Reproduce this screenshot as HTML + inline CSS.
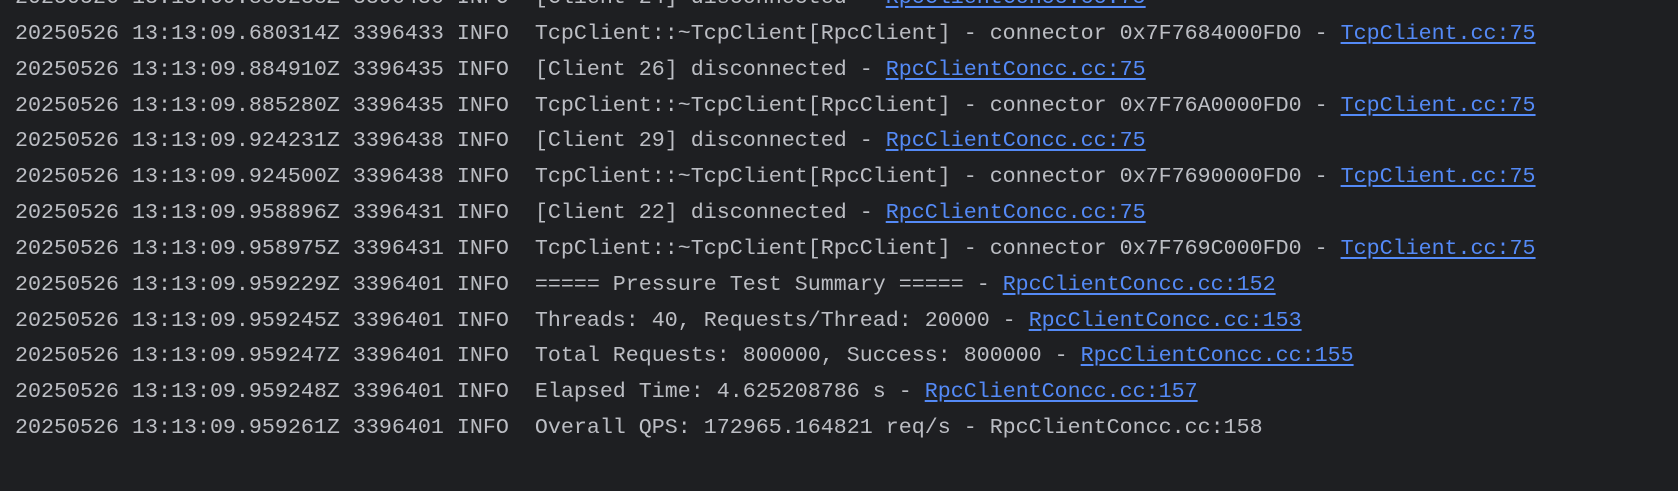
<!DOCTYPE html>
<html><head><meta charset="utf-8"><style>
html,body{margin:0;padding:0;background:#1e1f22;width:1678px;height:491px;overflow:hidden}
pre{margin:0;position:absolute;left:15px;top:-20px;font-family:"Liberation Mono","DejaVu Sans Mono",monospace;font-size:21.67px;line-height:35.85px;color:#bcbec4;white-space:pre}
a{color:#548af7;text-decoration:underline;text-underline-offset:3px}
</style></head><body><pre>20250526 13:13:09.880238Z 3396436 INFO  [Client 24] disconnected - <a>RpcClientConcc.cc:75</a>
20250526 13:13:09.680314Z 3396433 INFO  TcpClient::~TcpClient[RpcClient] - connector 0x7F7684000FD0 - <a>TcpClient.cc:75</a>
20250526 13:13:09.884910Z 3396435 INFO  [Client 26] disconnected - <a>RpcClientConcc.cc:75</a>
20250526 13:13:09.885280Z 3396435 INFO  TcpClient::~TcpClient[RpcClient] - connector 0x7F76A0000FD0 - <a>TcpClient.cc:75</a>
20250526 13:13:09.924231Z 3396438 INFO  [Client 29] disconnected - <a>RpcClientConcc.cc:75</a>
20250526 13:13:09.924500Z 3396438 INFO  TcpClient::~TcpClient[RpcClient] - connector 0x7F7690000FD0 - <a>TcpClient.cc:75</a>
20250526 13:13:09.958896Z 3396431 INFO  [Client 22] disconnected - <a>RpcClientConcc.cc:75</a>
20250526 13:13:09.958975Z 3396431 INFO  TcpClient::~TcpClient[RpcClient] - connector 0x7F769C000FD0 - <a>TcpClient.cc:75</a>
20250526 13:13:09.959229Z 3396401 INFO  ===== Pressure Test Summary ===== - <a>RpcClientConcc.cc:152</a>
20250526 13:13:09.959245Z 3396401 INFO  Threads: 40, Requests/Thread: 20000 - <a>RpcClientConcc.cc:153</a>
20250526 13:13:09.959247Z 3396401 INFO  Total Requests: 800000, Success: 800000 - <a>RpcClientConcc.cc:155</a>
20250526 13:13:09.959248Z 3396401 INFO  Elapsed Time: 4.625208786 s - <a>RpcClientConcc.cc:157</a>
20250526 13:13:09.959261Z 3396401 INFO  Overall QPS: 172965.164821 req/s - RpcClientConcc.cc:158
</pre></body></html>
